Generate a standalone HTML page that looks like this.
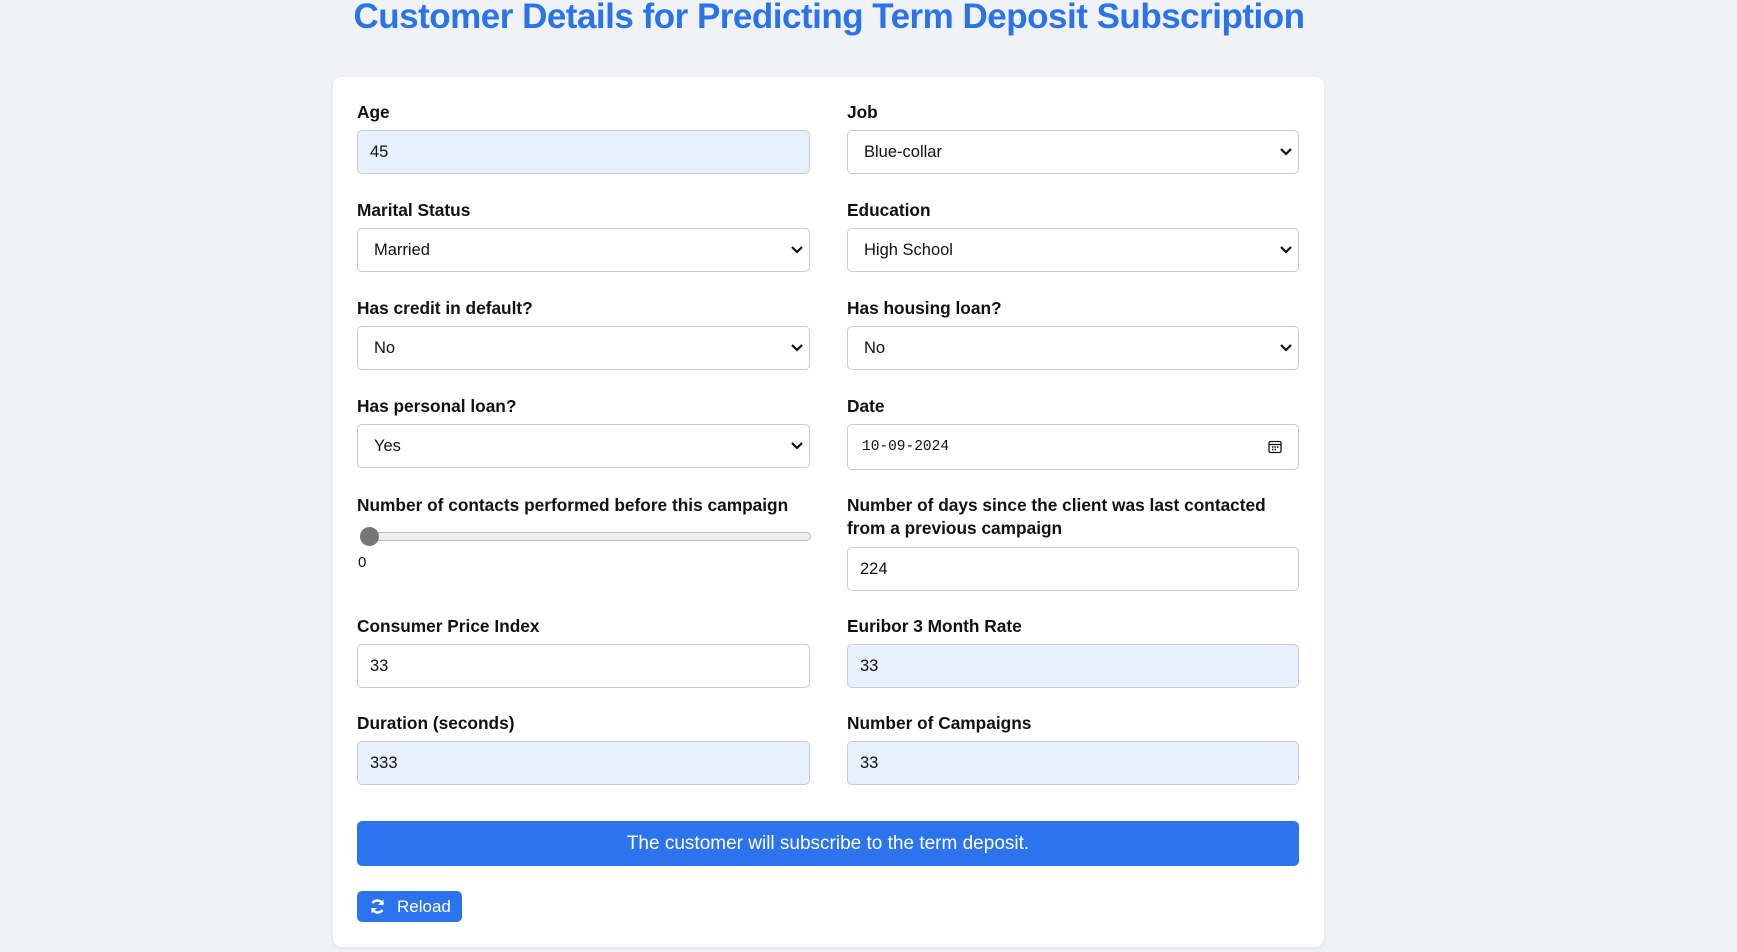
<!DOCTYPE html>
<html><head><meta charset="utf-8"><style>
*{box-sizing:border-box;margin:0;padding:0}
body{width:1737px;height:952px;background:#f0f2f6;position:relative;overflow:hidden;font-family:"Liberation Sans",sans-serif}
h1{position:absolute;left:0;width:1658px;text-align:center;top:-3px;font-size:35px;font-weight:bold;color:#2b74e8;letter-spacing:-0.5px}
.card{position:absolute;left:333px;top:77px;width:991px;height:870px;background:#fff;border-radius:9px;box-shadow:0 1px 4px rgba(0,0,0,.08)}
.l{position:absolute;font-size:17.3px;font-weight:bold;color:#111;line-height:23px}
.i{position:absolute;height:44px;border:1px solid #ccc;border-radius:5px;background:#fff;font-size:16.5px;color:#111;padding-left:16px;line-height:42px}
.f{background:#e8f0fe;padding-left:12px}
.s{padding-left:16px}
.s svg{position:absolute;right:5px;top:16px}
.a{left:357px;width:453px}
.b{left:847px;width:452px}
</style></head><body>
<h1>Customer Details for Predicting Term Deposit Subscription</h1>
<div class="card"></div>
<div class="l a" style="top:101px">Age</div>
<div class="i f a" style="top:130px">45</div>
<div class="l b" style="top:101px">Job</div>
<div class="i s b" style="top:130px">Blue-collar<svg width="14" height="10" viewBox="0 0 14 10"><path d="M2 2l5 5 5-5" fill="none" stroke="#111" stroke-width="2.2"/></svg></div>

<div class="l a" style="top:199px">Marital Status</div>
<div class="i s a" style="top:228px">Married<svg width="14" height="10" viewBox="0 0 14 10"><path d="M2 2l5 5 5-5" fill="none" stroke="#111" stroke-width="2.2"/></svg></div>
<div class="l b" style="top:199px">Education</div>
<div class="i s b" style="top:228px">High School<svg width="14" height="10" viewBox="0 0 14 10"><path d="M2 2l5 5 5-5" fill="none" stroke="#111" stroke-width="2.2"/></svg></div>

<div class="l a" style="top:297px">Has credit in default?</div>
<div class="i s a" style="top:326px">No<svg width="14" height="10" viewBox="0 0 14 10"><path d="M2 2l5 5 5-5" fill="none" stroke="#111" stroke-width="2.2"/></svg></div>
<div class="l b" style="top:297px">Has housing loan?</div>
<div class="i s b" style="top:326px">No<svg width="14" height="10" viewBox="0 0 14 10"><path d="M2 2l5 5 5-5" fill="none" stroke="#111" stroke-width="2.2"/></svg></div>

<div class="l a" style="top:395px">Has personal loan?</div>
<div class="i s a" style="top:424px">Yes<svg width="14" height="10" viewBox="0 0 14 10"><path d="M2 2l5 5 5-5" fill="none" stroke="#111" stroke-width="2.2"/></svg></div>
<div class="l b" style="top:395px">Date</div>
<div class="i b" style="top:424px;height:46px;padding-left:14px;font-family:'Liberation Mono',monospace;font-size:14.5px;line-height:44px">10-09-2024<svg style="position:absolute;right:16px;top:15px" width="14" height="14" viewBox="0 0 14 14"><rect x="1" y="1.5" width="12" height="11" rx="1.5" fill="none" stroke="#111" stroke-width="1.3"/><path d="M1 4.5h12" stroke="#111" stroke-width="1.3"/><path d="M4 7h1.5M6.5 7h1.5M9 7h1.5M4 9.5h1.5M6.5 9.5h1.5" stroke="#111" stroke-width="1.4"/></svg></div>

<div class="l a" style="top:494px">Number of contacts performed before this campaign</div>
<div style="position:absolute;left:361px;top:532px;width:450px;height:9px;border:1px solid #bbb;border-radius:5px;background:#eee"></div>
<div style="position:absolute;left:360px;top:527px;width:19px;height:19px;border-radius:50%;background:#777"></div>
<div style="position:absolute;left:358px;top:554px;font-size:15px;color:#111">0</div>
<div class="l b" style="top:494px">Number of days since the client was last contacted<br>from a previous campaign</div>
<div class="i b" style="top:547px;padding-left:12px">224</div>

<div class="l a" style="top:615px">Consumer Price Index</div>
<div class="i a" style="top:644px;padding-left:12px">33</div>
<div class="l b" style="top:615px">Euribor 3 Month Rate</div>
<div class="i f b" style="top:644px">33</div>

<div class="l a" style="top:712px">Duration (seconds)</div>
<div class="i f a" style="top:741px">333</div>
<div class="l b" style="top:712px">Number of Campaigns</div>
<div class="i f b" style="top:741px">33</div>

<div style="position:absolute;left:357px;top:821px;width:942px;height:45px;background:#2b74ee;border-radius:5px;color:#fff;font-size:19px;text-align:center;line-height:45px">The customer will subscribe to the term deposit.</div>
<div style="position:absolute;left:357px;top:891px;width:105px;height:31px;background:#2b74ee;border-radius:5px;color:#fff;font-size:17px;line-height:31px;padding-left:40px">Reload<svg style="position:absolute;left:12px;top:7px" width="17" height="17" viewBox="0 0 17 17"><path d="M14 6.5A6 6 0 0 0 3.5 5" fill="none" stroke="#fff" stroke-width="2.4"/><path d="M14.5 1.5v5.5h-5.5z" fill="#fff"/><path d="M3 10.5A6 6 0 0 0 13.5 12" fill="none" stroke="#fff" stroke-width="2.4"/><path d="M2.5 15.5v-5.5h5.5z" fill="#fff"/></svg></div>
</body></html>
